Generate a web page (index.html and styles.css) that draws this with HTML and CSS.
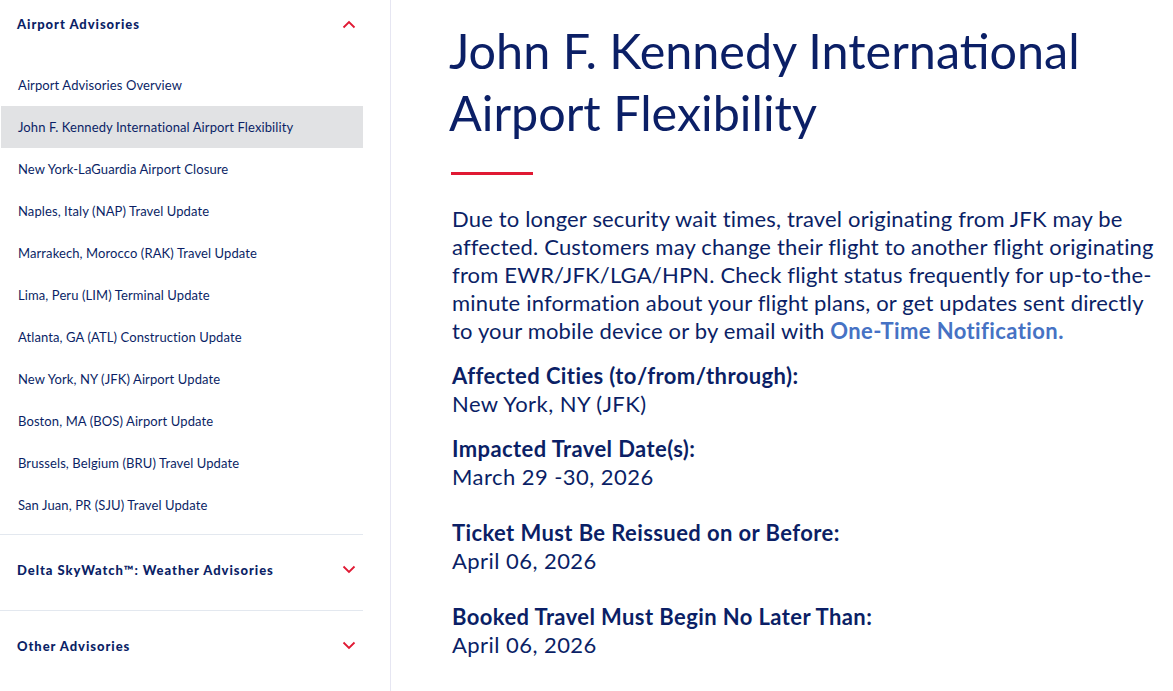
FILE: index.html
```html
<!DOCTYPE html>
<html lang="en">
<head>
<meta charset="utf-8">
<title>John F. Kennedy International Airport Flexibility</title>
<link rel="stylesheet" href="styles.css">
</head>
<body>
<div class="page">
  <aside class="sidebar">
    <section class="group open">
      <div class="group-head">
        <span class="group-title">Airport Advisories</span>
        <svg class="chev" width="14" height="9" viewBox="0 0 14 9"><path d="M1.5 7.5 L7 2 L12.5 7.5" fill="none" stroke="#e01933" stroke-width="1.8"/></svg>
      </div>
      <ul class="items">
        <li>Airport Advisories Overview</li>
        <li class="active">John F. Kennedy International Airport Flexibility</li>
        <li>New York-LaGuardia Airport Closure</li>
        <li>Naples, Italy (NAP) Travel Update</li>
        <li>Marrakech, Morocco (RAK) Travel Update</li>
        <li>Lima, Peru (LIM) Terminal Update</li>
        <li>Atlanta, GA (ATL) Construction Update</li>
        <li>New York, NY (JFK) Airport Update</li>
        <li>Boston, MA (BOS) Airport Update</li>
        <li>Brussels, Belgium (BRU) Travel Update</li>
        <li>San Juan, PR (SJU) Travel Update</li>
      </ul>
    </section>
    <section class="group closed">
      <div class="group-head">
        <span class="group-title">Delta SkyWatch™: Weather Advisories</span>
        <svg class="chev" width="14" height="9" viewBox="0 0 14 9"><path d="M1.5 1.5 L7 7 L12.5 1.5" fill="none" stroke="#e01933" stroke-width="1.8"/></svg>
      </div>
    </section>
    <section class="group closed">
      <div class="group-head">
        <span class="group-title">Other Advisories</span>
        <svg class="chev" width="14" height="9" viewBox="0 0 14 9"><path d="M1.5 1.5 L7 7 L12.5 1.5" fill="none" stroke="#e01933" stroke-width="1.8"/></svg>
      </div>
    </section>
  </aside>
  <main class="content">
    <h1 class="title">John F. Kennedy International Airport Flexibility</h1>
    <div class="rule"></div>
    <p class="lead">Due to longer security wait times, travel originating from JFK may be affected. Customers may change their flight to another flight originating from EWR/JFK/LGA/HPN. Check flight status frequently for up-to-the-minute information about your flight plans, or get updates sent directly to your mobile device or by email with <a class="link" href="#">One-Time Notification.</a></p>
    <div class="fact">
      <div class="label">Affected Cities (to/from/through):</div>
      <div class="value">New York, NY (JFK)</div>
    </div>
    <div class="fact">
      <div class="label">Impacted Travel Date(s):</div>
      <div class="value">March 29 -30, 2026</div>
    </div>
    <div class="fact spaced">
      <div class="label">Ticket Must Be Reissued on or Before:</div>
      <div class="value">April 06, 2026</div>
    </div>
    <div class="fact spaced">
      <div class="label">Booked Travel Must Begin No Later Than:</div>
      <div class="value">April 06, 2026</div>
    </div>
  </main>
</div>
</body>
</html>
```

FILE: styles.css
```css
* { box-sizing: border-box; }
html, body { margin: 0; padding: 0; background: #fff; }
body {
  font-family: Lato, "Open Sans", "Liberation Sans", sans-serif;
  color: #0b1f66;
}
.page {
  display: flex;
  align-items: stretch;
  min-height: 691px;
}
.sidebar {
  width: 391px;
  flex: none;
  padding-right: 27px;
  border-right: 1px solid #e6e6f2;
}
.group-head {
  display: flex;
  align-items: center;
  justify-content: space-between;
  padding: 0 7px 0 17px;
}
.group.open .group-head { height: 48px; }
.group.closed {
  border-top: 1px solid #e3e8ef;
}
.group.closed .group-head { height: 75px; padding-bottom: 6px; }
.group-title {
  font-size: 13px;
  font-weight: 900;
  letter-spacing: 0.95px;
}
.chev { display: block; }
.items {
  list-style: none;
  margin: 16px 0 8px;
  padding: 0;
}
.items li {
  height: 42px;
  display: flex;
  align-items: center;
  padding-left: 17px;
  margin-left: 1px;
  font-size: 13px;
  letter-spacing: 0.1px;
}
.items li.active { background: #e1e2e4; }
.content {
  flex: 1;
  padding: 19px 0 0 58px;
}
.title {
  margin: 0;
  font-size: 48.5px;
  font-weight: 400;
  line-height: 62px;
  width: 680px;
}
.rule {
  width: 82px;
  height: 3px;
  background: #e01933;
  margin: 29px 0 0 2px;
}
.lead {
  margin: 30px 0 0 3px;
  width: 712px;
  font-size: 22px;
  line-height: 28px;
  letter-spacing: 0.17px;
}
.link {
  color: #4672c4;
  font-weight: 700;
  letter-spacing: 0.4px;
  text-decoration: none;
}
.fact { margin: 17px 0 0 3px; }
.fact.spaced { margin-top: 28px; }
.label {
  font-size: 22px;
  font-weight: 700;
  line-height: 28px;
  letter-spacing: 0.4px;
}
.value {
  font-size: 22px;
  line-height: 28px;
  letter-spacing: 0.45px;
}
```
